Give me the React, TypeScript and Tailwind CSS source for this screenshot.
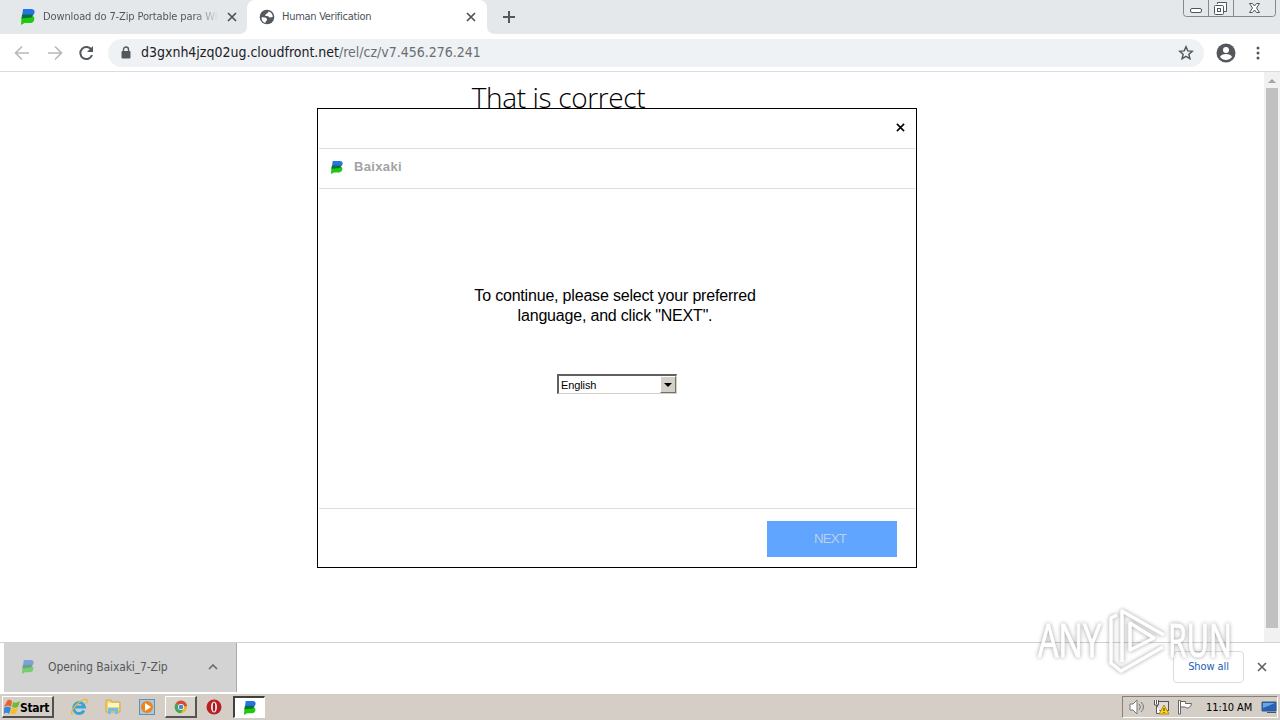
import type { ReactNode } from 'react';

// Baixaki "B" mark, blue top and green bottom
function BaixakiLogo({ className = '' }: { className?: string }) {
  return (
    <svg viewBox="0 0 14 16" preserveAspectRatio="none" className={`shrink-0 ${className}`}>
      <path d="M2 0h8.500c3.500 0 4 3.800 1.800 6L10 8H1z" fill="#2673e6" />
      <path d="M.5 8 11 6.500c3.500 1.500 3 6.300-1 7.500H3.500L0 16z" fill="#22c80f" />
      <path d="M1 5.500h11l-1.500 3L.6 9.500z" fill="#08713c" />
    </svg>
  );
}

function CloseIcon({ className = '' }: { className?: string }) {
  return (
    <svg viewBox="0 0 10 10" className={`shrink-0 ${className}`} stroke="currentColor" strokeWidth="1.7">
      <path d="m1 1 8 8M9 1 1 9" />
    </svg>
  );
}

function TabBar() {
  return (
    <div className="relative flex h-[34px] bg-[#e4e8eb] text-[#4d5257]">
      <div className="flex w-[247px] items-center pl-[21px]">
        <BaixakiLogo className="h-4 w-[14px]" />
        <div className="ml-2 w-[176px] overflow-hidden whitespace-nowrap bg-gradient-to-r from-[#4d5257] from-86% to-transparent bg-clip-text text-[11px] tracking-[-0.12px] text-transparent">
          Download do 7-Zip Portable para Windows
        </div>
        <CloseIcon className="ml-2 h-[10px] w-[10px]" />
      </div>
      <div className="relative flex w-60 items-center rounded-t-lg bg-white pl-3">
        <svg viewBox="0 0 8 8" className="absolute bottom-0 -left-2 h-2 w-2">
          <path d="M8 0v8H0q8 0 8-8z" fill="#fff" />
        </svg>
        <svg viewBox="0 0 8 8" className="absolute -right-2 bottom-0 h-2 w-2">
          <path d="M0 0v8h8Q0 8 0 0z" fill="#fff" />
        </svg>
        <svg viewBox="0 0 16 16" className="h-4 w-4 shrink-0">
          <circle cx="8" cy="8" r="7.300" fill="#54585c" />
          <path d="M2.500 8.500c2.500-.5 5.500 0 5.500 2s-1.500 1-1.500 3.500c-2.500-.6-4-2.500-4-5.500zM9.500 2.500C12 3 14 5.500 13.700 8L11 8.500C9.500 8.500 10 7 8 7S6 6.500 6.500 5.500 9 4.500 9.500 2.500z" fill="#fff" />
        </svg>
        <div className="ml-[7px] w-[184px] whitespace-nowrap text-[11px] tracking-[-0.28px]">Human Verification</div>
        <CloseIcon className="h-[10px] w-[10px]" />
      </div>
      <svg viewBox="0 0 12 12" className="ml-4 mt-[11px] h-3 w-3" stroke="#54585c" strokeWidth="2">
        <path d="M6 0v12M0 6h12" />
      </svg>
      <WindowButtons />
    </div>
  );
}

function WindowButtons() {
  return (
    <svg viewBox="0 0 94 17" className="ml-auto mr-[3px] h-[17px] w-[94px]" fill="none" stroke="#84898d">
      <path d="M.5 0v13.500q0 3 3 3h86q3 0 3-3V0M25.500 0v16M50.500 0v16" />
      <g stroke="#51565a">
        <rect x="7.500" y="8.500" width="11" height="4" rx="1.500" fill="#fff" />
        <path d="M34.500 4V2.500h9v9H41" fill="#fff" />
        <rect x="31.500" y="5.500" width="9" height="9" rx="1" fill="#fff" />
        <rect x="34.500" y="8.500" width="3" height="3" />
        <path d="M66.500 3.500h3l2 2.500 2-2.500h3L73.500 8l3 4.500h-3l-2-2.500-2 2.500h-3l3-4.500z" fill="#fff" />
      </g>
    </svg>
  );
}

function AddressBar() {
  return (
    <div className="flex h-[38px] items-center border-b border-[#dadcdf] bg-white">
      <svg viewBox="0 0 80 16" className="ml-[14px] h-4 w-20" fill="none" strokeWidth="1.600">
        <path d="M15 8H2m6-6.500L1.500 8 8 14.500M34 8h13m-6-6.500L47.500 8 41 14.500" stroke="#b6b8ba" />
        <path d="M77.500 5A6 6 0 1 0 78 10" stroke="#54585c" strokeWidth="2" />
        <path d="M79 1v6h-6z" fill="#54585c" />
      </svg>
      <div className="ml-[14px] flex h-7 w-[1096px] items-center rounded-full bg-[#eff2f4] pl-[13px] pr-[10px]">
        <svg viewBox="0 0 10 13" className="h-[13px] w-[10px]">
          <path d="M2.500 6V3.500a2.500 2.500 0 0 1 5 0V6" fill="none" stroke="#54585c" strokeWidth="1.400" />
          <rect x=".5" y="5" width="9" height="7.500" rx="1" fill="#54585c" />
        </svg>
        <div className="-mt-0.5 ml-[10px] whitespace-nowrap text-sm tracking-[-0.01px] text-[#202124]">
          d3gxnh4jzq02ug.cloudfront.net<span className="text-[#696e73]">/rel/cz/v7.456.276.241</span>
        </div>
        <svg viewBox="0 0 16 16" className="ml-auto h-4 w-4" fill="none" stroke="#54585c" strokeWidth="1.500">
          <path d="m8 1.800 1.800 4.100 4.500.4-3.400 3 1 4.400L8 11.400l-3.900 2.300 1-4.400-3.400-3 4.500-.4z" />
        </svg>
      </div>
      <svg viewBox="0 0 20 20" className="ml-3 h-5 w-5">
        <circle cx="10" cy="10" r="9.500" fill="#54585c" />
        <circle cx="10" cy="7" r="3" fill="#fff" />
        <path d="M4 14c1-4 11-4 12 0-3 4-9 4-12 0z" fill="#fff" />
      </svg>
      <svg viewBox="0 0 4 14" className="ml-5 h-[14px] w-1" fill="#54585c">
        <circle cx="2" cy="2" r="1.500" />
        <circle cx="2" cy="7" r="1.500" />
        <circle cx="2" cy="12" r="1.500" />
      </svg>
    </div>
  );
}

function Scrollbar() {
  return (
    <div className="flex w-4 flex-col items-center bg-[#f1f1f1]">
      <svg viewBox="0 0 16 16" className="h-4 w-4">
        <path d="m4 11 4-4 4 4z" fill="#a3a3a3" />
      </svg>
      <div className="h-[540px] w-3 bg-[#c1c1c1]" />
    </div>
  );
}

function InstallerDialog() {
  return (
    <div className="relative flex h-[460px] w-[600px] flex-col border border-black bg-white font-['Liberation_Sans',sans-serif]">
      <div className="mx-px flex h-10 items-center justify-end border-b border-[#dedede] pr-[10px] pb-0.5">
        <CloseIcon className="h-[9px] w-[9px]" />
      </div>
      <div className="mx-px flex h-10 items-center border-b border-[#dedede] pb-[3px] pl-3">
        <BaixakiLogo className="h-[13px] w-3" />
        <span className="ml-[11px] text-[13px] font-bold tracking-[0.35px] text-[#a3a3a3]">Baixaki</span>
      </div>
      <div className="flex flex-1 flex-col items-center">
        <p className="mt-[97px] mr-1 whitespace-nowrap text-center text-base leading-5 tracking-[-0.19px] text-black">
          To continue, please select your preferred
          <br />
          language, and click "NEXT".
        </p>
        <button className="mt-12 flex h-5 w-[120px] items-center border border-t-2 border-l-2 border-[#d4d0c8] border-t-[#606060] border-l-[#606060] bg-white pl-0.5 text-[11px] text-black">
          <span className="mt-0.5 tracking-[-0.1px]">English</span>
          <span className="ml-auto flex h-full w-4 items-center justify-center border border-[#707070] border-t-white border-l-white bg-[#d4d0c8]">
            <svg viewBox="0 0 8 4" className="h-1 w-2">
              <path d="M0 0h8L4 4z" />
            </svg>
          </span>
        </button>
      </div>
      <div className="mx-px flex h-[59px] items-start justify-end border-t border-[#dedede] pt-3 pr-[18px]">
        <button className="h-9 w-[130px] bg-[#60a5ff] pr-1 text-[13.3px] tracking-[-0.9px] text-[#bdcfe5]">NEXT</button>
      </div>
    </div>
  );
}

function DownloadShelf() {
  return (
    <div className="flex h-[51px] border-t border-[#d2d2d2] bg-white">
      <div className="ml-1 flex h-[49px] w-[233px] items-center border-r border-[#aaa] bg-[#d3d3d3] pb-0.5 pl-[18px] text-[#54585c]">
        <BaixakiLogo className="h-[14px] w-3 opacity-50" />
        <span className="ml-[14px] w-[160px] whitespace-nowrap text-xs tracking-[-0.1px]">Opening Baixaki_7-Zip</span>
        <svg viewBox="0 0 10 6" className="h-1.5 w-[10px]" fill="none" stroke="#66696c" strokeWidth="1.600">
          <path d="m1 5 4-4 4 4" />
        </svg>
      </div>
      <button className="mt-2 ml-auto h-8 w-[71px] rounded border border-[#dadce0] bg-white text-[11px] tracking-[-0.1px] text-[#2161b5]">Show all</button>
      <CloseIcon className="mt-[19px] mr-[13px] ml-[13px] h-[10px] w-[10px] text-[#606469]" />
    </div>
  );
}

function Watermark() {
  return (
    <svg
      viewBox="0 0 204 72"
      className="pointer-events-none absolute top-[604px] left-[1034px] h-[72px] w-[204px] overflow-visible opacity-85 drop-shadow-[0_0_2px_rgba(0,0,0,0.45)]"
    >
      <g fill="#fff" stroke="#fff" strokeWidth="1" className="font-['Open_Sans',sans-serif]" fontSize="46">
        <text x="4" y="53" textLength="63" lengthAdjust="spacingAndGlyphs">ANY</text>
        <text x="134" y="53" textLength="64" lengthAdjust="spacingAndGlyphs">RUN</text>
      </g>
      <g fill="none" stroke="#fff" strokeLinejoin="round" strokeWidth="3.500">
        <path d="M83 11l-6 3v45l10 8 42-24" />
        <path d="M88 58V7l42 24M96 19v27l24-12z" />
      </g>
    </svg>
  );
}

function TaskButton({ pressed = false, children }: { pressed?: boolean; children: ReactNode }) {
  return (
    <div
      className={`flex h-[22px] w-8 items-center justify-center border ${
        pressed
          ? 'border-t-2 border-l-2 border-[#404040] border-r-white border-b-white bg-white'
          : 'border-r-2 border-b-2 border-white border-r-[#555] border-b-[#555] bg-[#d8d4cb]'
      }`}
    >
      {children}
    </div>
  );
}

function Taskbar() {
  return (
    <div className="flex h-[27px] items-center border-t border-white bg-[#d4cec7]">
      <div className="ml-0.5 flex h-[22px] w-[52px] items-center border border-white border-r-2 border-b-2 border-r-[#505050] border-b-[#505050] pl-px">
        <svg viewBox="0 0 16 16" className="h-4 w-4 shrink-0">
          <path d="M3 2c2-2 3-1 5 0L7 8C4 6 3 7 0 8z" fill="#e8602c" />
          <path d="M9 3c2 1 4 1 7-1l-2 6c-2 1-4 1-6 0z" fill="#71b92e" />
          <path d="M0 9c2-1 4-2 7 0l-2 6c-2-2-4-1-5 0z" fill="#3289d5" />
          <path d="M8 9c2 1 4 1 6 0l-2 5c-2 2-4 1-6 0z" fill="#f6bd24" />
        </svg>
        <span className="mt-0.5 text-xs font-bold tracking-[-0.3px] text-black">Start</span>
      </div>
      <svg viewBox="0 0 18 18" className="ml-4 h-[18px] w-[18px]" fill="none">
        <path d="M14 12.500a5.500 5.500 0 1 1 .5-3.500H5" stroke="#38a3d9" strokeWidth="2.800" />
        <path d="M2.500 16.500C-2 14 11 0 16.500 1.500c1 1 .5 3-.5 4" stroke="#e6b936" strokeWidth="1.300" />
      </svg>
      <svg viewBox="0 0 16 16" className="ml-[17px] h-4 w-4">
        <path d="M1 1h5l1 2h8v10H1z" fill="#f2d475" stroke="#d0a946" />
        <path d="M3 4h11v4H3z" fill="#fff6c8" />
        <path d="M3 15V9h10v6h-3v-3H6v3z" fill="#75bce2" />
      </svg>
      <svg viewBox="0 0 16 16" className="ml-[18px] h-4 w-4">
        <rect x=".5" y=".5" width="15" height="15" fill="#a9cae3" stroke="#5f91b7" />
        <circle cx="8" cy="8" r="6" fill="#ef8418" />
        <path d="m6 4 6 4-6 4z" fill="#fff" />
      </svg>
      <div className="ml-[10px]">
        <TaskButton>
          <svg viewBox="0 0 16 16" className="h-[14px] w-[14px]">
            <circle cx="8" cy="8" r="7" fill="#e8bd2c" />
            <path d="M2 4a7 7 0 0 1 12 0l1 3H8z" fill="#d94a36" />
            <path d="M2 4a7 7 0 0 0 6 11l3-6-3-2z" fill="#48a45b" />
            <circle cx="8" cy="8" r="3.500" fill="#fff" />
            <circle cx="8" cy="8" r="2.700" fill="#4589cc" />
          </svg>
        </TaskButton>
      </div>
      <svg viewBox="0 0 16 16" className="ml-[9px] h-4 w-4">
        <circle cx="8" cy="8" r="7.500" fill="#b91e23" />
        <ellipse cx="8" cy="8" rx="3" ry="5.500" fill="#eee" />
        <ellipse cx="8" cy="8" rx="1.200" ry="4.500" fill="#a3171c" />
      </svg>
      <div className="ml-[11px]">
        <TaskButton pressed>
          <BaixakiLogo className="h-[14px] w-3" />
        </TaskButton>
      </div>
      <Tray />
    </div>
  );
}

function Tray() {
  return (
    <div className="mr-0.5 ml-auto flex h-[22px] w-[156px] items-center border border-[#858078] border-r-white border-b-white pl-[6px]">
      <svg viewBox="0 0 17 16" className="h-4 w-[17px]" fill="none" stroke="#777">
        <path d="M1 5h3l4-4v14l-4-4H1z" fill="#fff" />
        <path d="M10 5q3 3 0 6m2-8q5 5 0 10" />
      </svg>
      <svg viewBox="0 0 17 16" className="ml-[7px] h-4 w-[17px]">
        <rect x="4.500" y="2.500" width="11" height="9" fill="#ddd" stroke="#555" />
        <path d="M1.500 1v5h4V1M3.500 6v8.500H8M3.500 1v4" fill="#fff" stroke="#555" />
        <path d="m11 6 5 9H6z" fill="#ffd51c" stroke="#b58c0d" />
        <path d="M11 9v3m0 1v1" stroke="#222" />
      </svg>
      <svg viewBox="0 0 17 16" className="ml-[6px] h-4 w-[17px]" fill="#fff" stroke="#666">
        <path d="M2.500 15V1.500h2V15zM4.500 2.500h5v2h6q-1 5-5 4.500l-1-1h-5z" />
      </svg>
      <span className="mt-0.5 ml-[13px] whitespace-nowrap text-[11px] tracking-[-0.1px] text-black">11:10 AM</span>
      <svg viewBox="0 0 16 16" className="ml-auto h-4 w-4">
        <path d="M1 3h14v9H1z" fill="#2762b5" stroke="#315a87" />
        <path d="M2 4h12L2 9z" fill="#6ba5e6" />
        <path d="M6 13h9v1H6z" fill="#456" />
      </svg>
    </div>
  );
}

export default function App() {
  return (
    <div className="relative flex h-[720px] w-[1280px] flex-col overflow-hidden bg-white font-['DejaVu_Sans_Condensed','DejaVu_Sans',sans-serif]">
      <TabBar />
      <AddressBar />
      <main className="flex h-[570px]">
        <div className="w-[1264px] pl-[317px]">
          <h1 className="h-9 w-[483px] pt-1 text-center font-['Open_Sans',sans-serif] text-[28px] leading-[42px] font-light tracking-[-0.35px] text-black">That is correct</h1>
          <InstallerDialog />
        </div>
        <Scrollbar />
      </main>
      <DownloadShelf />
      <Taskbar />
      <Watermark />
    </div>
  );
}
